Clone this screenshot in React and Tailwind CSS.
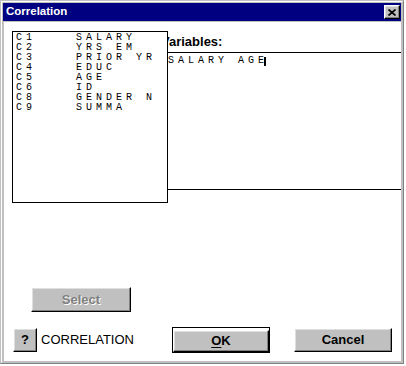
import React from "react";

const columns = [
  ["C1", "SALARY"],
  ["C2", "YRS EM"],
  ["C3", "PRIOR YR"],
  ["C4", "EDUC"],
  ["C5", "AGE"],
  ["C6", "ID"],
  ["C8", "GENDER N"],
  ["C9", "SUMMA"],
];

// classic 3d bevel for the gray push buttons
const bevel =
  "bg-[#c0c0c0] border border-t-white border-l-white border-r-black border-b-black shadow-[inset_-1px_-1px_0_#808080,inset_1px_1px_0_#dfdfdf]";

const mono = "font-['Liberation_Mono',monospace] text-[10px] leading-[10px] tracking-[4px] text-black";

function CloseBox() {
  return (
    <div className={`${bevel} w-[16px] h-[14px] flex items-center justify-center`}>
      <svg width="8" height="7" viewBox="0 0 8 7">
        <path d="M0.5 0.5 L7.5 6.5 M7.5 0.5 L0.5 6.5" stroke="#000" strokeWidth="1.7" />
      </svg>
    </div>
  );
}

export default function App() {
  return (
    <div className="w-[406px] h-[366px] bg-white font-['Liberation_Sans',Arial,sans-serif]">
      <div className="w-[404px] h-[364px] border border-t-[#c0c0c0] border-l-[#c0c0c0] border-r-[#808080] border-b-[#808080]">
        <div className="w-full h-full bg-[#c0c0c0] border border-t-white border-l-white border-r-[#c0c0c0] border-b-[#c0c0c0] p-px flex flex-col">
          {/* title bar */}
          <div className="h-[18px] bg-[#000080] flex items-center pl-[3px] pr-[1px]">
            <span className="text-white font-bold text-[11.5px] leading-none">Correlation</span>
            <div className="ml-auto">
              <CloseBox />
            </div>
          </div>

          {/* dialog body */}
          <div className="flex-1 bg-white ml-px mt-px flex flex-col">
            <div className="flex pl-[8px] pt-[9px]">
              <div className="relative z-10 w-[156px] h-[172px] bg-white border border-black pl-[3px] pt-px">
                {columns.map(([c, name]) => (
                  <div key={c} className={`${mono} flex whitespace-pre`}>
                    <span className="w-[60px]">{c}</span>
                    <span>{name}</span>
                  </div>
                ))}
              </div>

              <div className="flex-1 flex flex-col">
                <div className="-ml-[7px] mt-[3px] h-[16px] leading-[16px] text-[13px] font-bold text-black whitespace-nowrap">
                  Variables:
                </div>
                <div className="mt-[2px] h-[138px] border-t border-b border-black pt-[3px]">
                  <div className={`${mono} flex items-center whitespace-pre`}>
                    <span>SALARY AGE</span>
                    <span className="w-[2px] h-[9px] bg-black -ml-[4px]" />
                  </div>
                </div>
              </div>
            </div>

            <div className="flex-1" />

            <div className="pl-[27px]">
              <button
                className={`${bevel} w-[100px] h-[25px] text-[13px] font-bold text-[#808080] [text-shadow:1px_1px_0_#fff]`}
              >
                Select
              </button>
            </div>

            <div className="flex items-center mt-[15px] mb-[8px] pl-[9px]">
              <button className={`${bevel} w-[24px] h-[24px] text-[13px] font-bold text-black`}>?</button>
              <span className="ml-[4px] w-[131px] text-[13px] text-black">CORRELATION</span>
              <div className="border border-black">
                <button className={`${bevel} w-[96px] h-[22px] text-[13px] font-bold text-black`}>
                  <span className="underline underline-offset-2">O</span>K
                </button>
              </div>
              <button className={`${bevel} ml-[24px] w-[98px] h-[24px] text-[13px] font-bold text-black`}>
                Cancel
              </button>
            </div>
          </div>
        </div>
      </div>
    </div>
  );
}
